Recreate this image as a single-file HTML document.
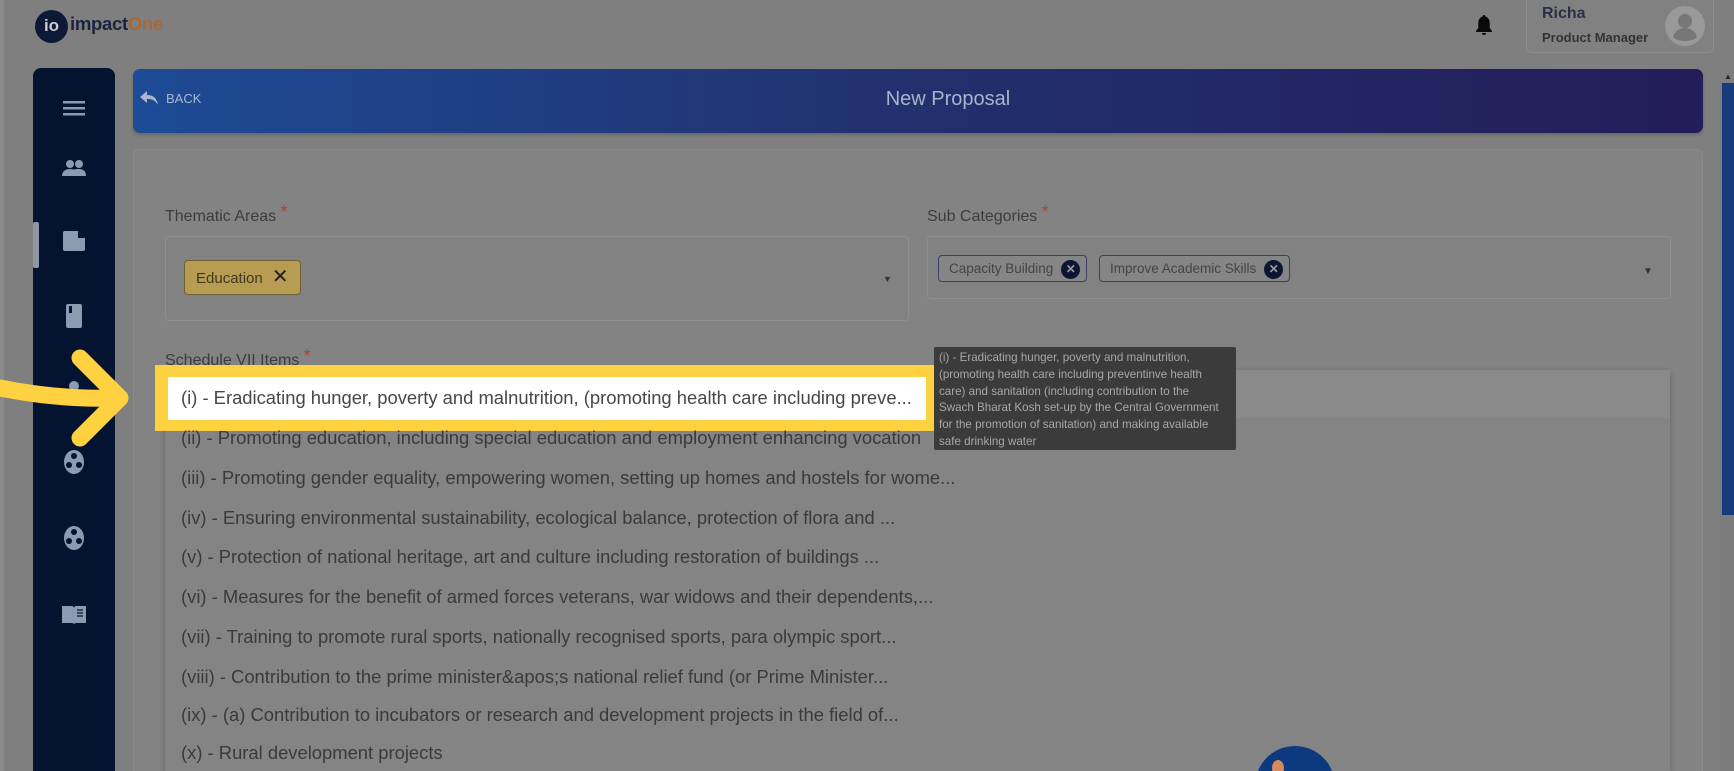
<!DOCTYPE html>
<html style="width:1734px;height:771px;overflow:hidden"><head><meta charset="utf-8"><style>
*{box-sizing:border-box;margin:0;padding:0}
body{width:1734px;height:771px;overflow:hidden;background:#7f7f7f;font-family:"Liberation Sans",sans-serif;position:relative;color:#3a3a3a}
.abs{position:absolute}
.side{left:33px;top:68px;width:82px;height:703px;background:#04132f;border-radius:8px 8px 0 0}
.ic{position:absolute;left:74px;transform:translate(-50%,-50%);}
.banner{left:133px;top:69px;width:1570px;height:64px;border-radius:7px;background:linear-gradient(90deg,#1d4b95,#22306e 50%,#231d5a);box-shadow:0 2px 3px rgba(0,0,0,.2)}
.card{left:133px;top:149px;width:1570px;height:622px;background:#838383;border:1px solid #8a8a8a;border-bottom:none;border-radius:6px 6px 0 0}
.lbl{font-size:16px;color:#3c3c3c}
.lbl b{color:#b0452c;font-weight:normal;font-size:18px;vertical-align:top;position:relative;top:-6px}
.box{border:1px solid #8f8f8f;border-radius:4px;background:#828282}
.chip{position:absolute;border:1px solid #3a3f66;border-radius:4px;font-size:13.5px;color:#444;padding:0 6px 0 10px;height:27px;line-height:25px;background:#858585}
.x{display:inline-block;width:19px;height:19px;border-radius:50%;background:#0d1630;color:#999;font-size:12px;line-height:19px;text-align:center;vertical-align:middle;margin-left:8px;font-weight:bold}
.list{left:165px;top:370px;width:1505px;height:401px;background:#848484;border-radius:4px 4px 0 0;box-shadow:0 2px 6px rgba(0,0,0,.25)}
.it{position:absolute;left:181px;font-size:18.4px;line-height:20px;height:20px;color:#3a3a3a;white-space:nowrap}
.tip{left:934px;top:347px;width:302px;height:103px;background:#3b3b3b;color:#a8a8a8;font-size:11.6px;line-height:16.8px;padding:3px 5px;border-radius:2px;white-space:nowrap;overflow:hidden}
</style></head><body>
<div class="abs" style="left:0;top:0;width:4px;height:771px;background:#8a8a8a"></div>
<div class="abs" style="left:35px;top:10px;width:33px;height:33px;border-radius:50%;background:#0c1a38;color:#ccc;font-weight:bold;font-size:17px;line-height:32px;text-align:center">io</div>
<div class="abs" style="left:70px;top:13px;font-size:18.5px;font-weight:bold;color:#1b2340;letter-spacing:-.3px">impact<span style="color:#a8683c">One</span></div>
<svg class="abs" style="left:1475px;top:14px" width="18" height="22" viewBox="0 0 18 22"><path d="M9 1c-1 0-1.5.8-1.5 1.6C4.6 3.4 3.3 6 3.3 9v5L1 17v1h16v-1l-2.3-3V9c0-3-1.3-5.6-4.2-6.4C10.5 1.8 10 1 9 1zM7 19a2 2 0 004 0z" fill="#0a0a0a"/></svg>
<div class="abs" style="left:1526px;top:0;width:188px;height:53px;border:1px solid #8d8d8d;border-top:none;border-radius:0 0 6px 6px;background:#818181"></div>
<div class="abs" style="left:1542px;top:5px;font-size:16px;font-weight:bold;color:#2b3046">Richa</div>
<div class="abs" style="left:1542px;top:30px;font-size:13px;font-weight:bold;color:#333">Product Manager</div>
<div class="abs" style="left:1665px;top:6px;width:40px;height:40px;border-radius:50%;background:#999"></div>
<svg class="abs" style="left:1665px;top:6px" width="40" height="40" viewBox="0 0 40 40"><circle cx="20" cy="15" r="7" fill="#777"/><path d="M8 31c2-7 8-9 12-9s10 2 12 9c-3 3-7 4-12 4s-9-1-12-4z" fill="#777"/></svg>
<div class="abs side"></div>
<div class="abs" style="left:33px;top:222px;width:6px;height:46px;background:#8e96a3;border-radius:2px"></div>
<svg class="ic" style="top:108px" width="22" height="16"><rect y="1" width="22" height="2.5" fill="#8d9bb0"/><rect y="7" width="22" height="2.5" fill="#8d9bb0"/><rect y="13" width="22" height="2.5" fill="#8d9bb0"/></svg>
<svg class="ic" style="top:168px" width="26" height="18" viewBox="0 0 26 18"><circle cx="9" cy="5" r="4" fill="#8d9bb0"/><circle cx="18" cy="5" r="4" fill="#8d9bb0"/><path d="M1 17c0-5 4-7 8-7s8 2 8 7zM14 17c0-3-1-5-2-6 2-1 4-1 6-1 4 0 7 2 7 7z" fill="#8d9bb0"/></svg>
<svg class="ic" style="top:241px" width="22" height="20" viewBox="0 0 22 20"><path d="M2 0h13l7 7v11a2 2 0 01-2 2H2a2 2 0 01-2-2V2a2 2 0 012-2z" fill="#8d9bb0"/><path d="M15 0v7h7z" fill="#04132f"/></svg>
<svg class="ic" style="top:316px" width="16" height="24"><rect width="16" height="24" rx="2" fill="#8d9bb0"/><rect x="3" y="2" width="3" height="7" fill="#04132f"/></svg>
<svg class="ic" style="top:386px" width="10" height="10"><circle cx="5" cy="5" r="5" fill="#8d9bb0"/></svg>
<svg class="ic" style="top:462px" width="22" height="24" viewBox="0 0 22 24"><ellipse cx="11" cy="12" rx="10" ry="12" fill="#8d9bb0"/><circle cx="11" cy="6" r="3" fill="#04132f"/><circle cx="6" cy="15" r="3" fill="#04132f"/><circle cx="16" cy="15" r="3" fill="#04132f"/></svg>
<svg class="ic" style="top:538px" width="22" height="24" viewBox="0 0 22 24"><ellipse cx="11" cy="12" rx="10" ry="12" fill="#8d9bb0"/><circle cx="11" cy="6" r="3" fill="#04132f"/><circle cx="6" cy="15" r="3" fill="#04132f"/><circle cx="16" cy="15" r="3" fill="#04132f"/></svg>
<svg class="ic" style="top:614px" width="26" height="20" viewBox="0 0 26 20"><path d="M1 2h10c1 0 2 1 2 2v16c-1-1-2-1-3-1H1z M25 2H15c-1 0-2 1-2 2v16c1-1 2-1 3-1h9z" fill="#8d9bb0"/><path d="M16 6h6M16 9h6M16 12h6" stroke="#04132f" stroke-width="1.3"/></svg>
<div class="abs banner"></div>
<svg class="abs" style="left:140px;top:91px" width="18" height="14" viewBox="0 0 18 14"><path d="M7 0L0 6l7 6V8c5 0 8 1 11 6-1-6-4-10-11-10z" fill="#a9b6cf"/></svg>
<div class="abs" style="left:166px;top:91px;font-size:13px;color:#a9b6cf">BACK</div>
<div class="abs" style="left:0;width:1896px;top:88px;text-align:center;font-size:20px;color:#a9b3cc">New Proposal</div>
<div class="abs card"></div>
<div class="abs lbl" style="left:165px;top:208px">Thematic Areas <b>*</b></div>
<div class="abs box" style="left:165px;top:236px;width:744px;height:85px"></div>
<div class="abs" style="left:184px;top:260px;width:117px;height:35px;background:#b89c52;border:1px solid #6f5f34;border-radius:4px;font-size:15px;color:#3e3720;line-height:33px;padding-left:11px">Education <span style="font-size:20px;margin-left:5px;color:#222">✕</span></div>
<div class="abs" style="left:883px;top:274px;font-size:9px;color:#333">▼</div>
<div class="abs lbl" style="left:927px;top:208px">Sub Categories <b>*</b></div>
<div class="abs box" style="left:927px;top:236px;width:744px;height:63px"></div>
<div class="chip" style="left:938px;top:255px">Capacity Building<span class="x">✕</span></div>
<div class="chip" style="left:1099px;top:255px">Improve Academic Skills<span class="x">✕</span></div>
<div class="abs" style="left:1643px;top:266px;font-size:10px;color:#333">▼</div>
<div class="abs lbl" style="left:165px;top:352px">Schedule VII Items <b>*</b></div>
<div class="abs list"></div>
<div class="abs" style="left:165px;top:370px;width:1505px;height:48px;background:#8a8a8a"></div>
<div class="abs" style="left:155px;top:365px;width:783px;height:66px;background:#fdd13f"></div>
<div class="abs" style="left:168px;top:377px;width:758px;height:43px;background:#fff"></div>
<div class="it" style="top:388px;color:#474747">(i) - Eradicating hunger, poverty and malnutrition, (promoting health care including preve...</div>
<div class="it" style="top:428px">(ii) - Promoting education, including special education and employment enhancing vocation</div>
<div class="it" style="top:468px">(iii) - Promoting gender equality, empowering women, setting up homes and hostels for wome...</div>
<div class="it" style="top:508px">(iv) - Ensuring environmental sustainability, ecological balance, protection of flora and ...</div>
<div class="it" style="top:547px">(v) - Protection of national heritage, art and culture including restoration of buildings ...</div>
<div class="it" style="top:587px">(vi) - Measures for the benefit of armed forces veterans, war widows and their dependents,...</div>
<div class="it" style="top:627px">(vii) - Training to promote rural sports, nationally recognised sports, para olympic sport...</div>
<div class="it" style="top:667px">(viii) - Contribution to the prime minister&amp;apos;s national relief fund (or Prime Minister...</div>
<div class="it" style="top:705px">(ix) - (a) Contribution to incubators or research and development projects in the field of...</div>
<div class="it" style="top:743px">(x) - Rural development projects</div>
<div class="abs tip">(i) - Eradicating hunger, poverty and malnutrition,<br>(promoting health care including preventinve health<br>care) and sanitation (including contribution to the<br>Swach Bharat Kosh set-up by the Central Government<br>for the promotion of sanitation) and making available<br>safe drinking water</div>
<svg class="abs" style="left:0;top:340px" width="140" height="110" viewBox="0 0 140 110"><path d="M0 48 Q60 60 118 58" stroke="#fdd13f" stroke-width="17" fill="none" stroke-linecap="round"/><path d="M80 18 L120 58 L80 98" stroke="#fdd13f" stroke-width="17" fill="none" stroke-linecap="round" stroke-linejoin="round"/></svg>
<div class="abs" style="left:1720px;top:83px;width:14px;height:688px;background:#7c7c7c"></div>
<div class="abs" style="left:1722px;top:83px;width:12px;height:432px;background:#163c7c"></div>
<div class="abs" style="left:1724px;top:72px;font-size:8px;color:#222">▲</div>
<svg class="abs" style="left:1255px;top:746px" width="80" height="25" viewBox="0 0 80 25"><circle cx="40" cy="40" r="40" fill="#0d3a7e"/><ellipse cx="23" cy="22" rx="6" ry="8" fill="#d7895a"/></svg>
</body></html>
